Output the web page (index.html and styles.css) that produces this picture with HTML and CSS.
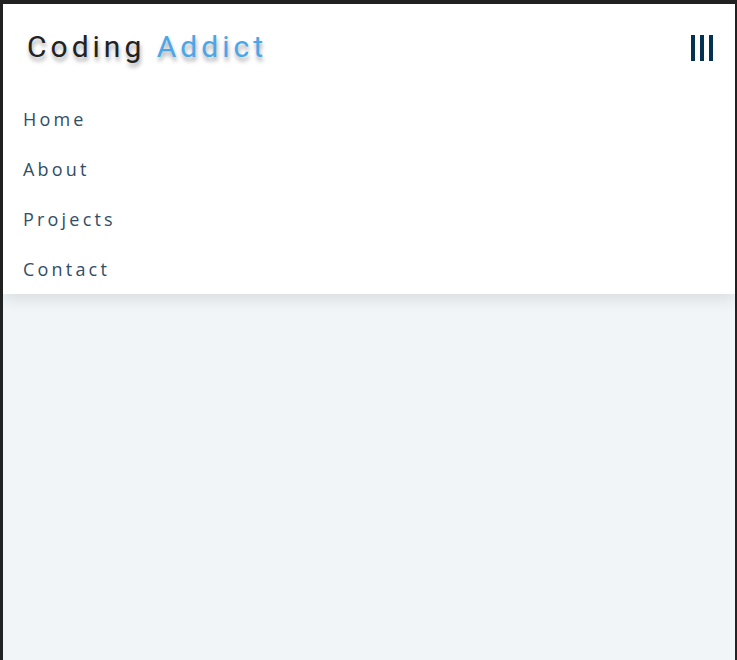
FILE: index.html
```html
<!DOCTYPE html>
<html lang="en">
<head>
<meta charset="utf-8">
<title>Coding Addict</title>
<link rel="stylesheet" href="styles.css">
</head>
<body>
<div class="frame">
  <nav class="navbar">
    <div class="nav-header">
      <h1 class="logo">Coding <span class="accent">Addict</span></h1>
      <button class="nav-toggle" aria-label="menu">
        <span class="bar"></span><span class="bar"></span><span class="bar"></span>
      </button>
    </div>
    <ul class="links">
      <li><a href="#">Home</a></li>
      <li><a href="#">About</a></li>
      <li><a href="#">Projects</a></li>
      <li><a href="#">Contact</a></li>
    </ul>
  </nav>
</div>
</body>
</html>
```
FILE: styles.css
```css
* { box-sizing: border-box; margin: 0; padding: 0; }
html, body { height: 100%; }
body {
  background: #222222;
  font-family: "Open Sans", "Liberation Sans", sans-serif;
}
.frame {
  height: 100%;
  margin: 4px 2px 0 3px;
  background: #f1f5f8;
}
.navbar {
  background: #ffffff;
  box-shadow: 0 5px 15px rgba(0, 0, 0, 0.1);
}
.nav-header {
  height: 90px;
  display: flex;
  align-items: center;
  justify-content: space-between;
  padding: 0 22px 0 24px;
}
.logo {
  font-family: Roboto, "Liberation Sans", sans-serif;
  font-weight: 400;
  font-size: 30px;
  letter-spacing: 4px;
  color: #222222;
  text-shadow: 1px 4px 4px rgba(0, 0, 0, 0.35);
  margin-top: -6px;
}
.accent { color: #49a6e9; }
.nav-toggle {
  background: transparent;
  border: 0;
  display: flex;
  gap: 5px;
  height: 26px;
  margin-top: -2px;
}
.bar {
  display: block;
  width: 4px;
  height: 26px;
  background: #063251;
}
.links { list-style: none; }
.links li { height: 50px; display: flex; align-items: center; padding-bottom: 1px; }
.links a {
  display: block;
  padding: 0 20px;
  font-size: 18px;
  letter-spacing: 3.2px;
  color: #324d67;
  text-decoration: none;
}
```
